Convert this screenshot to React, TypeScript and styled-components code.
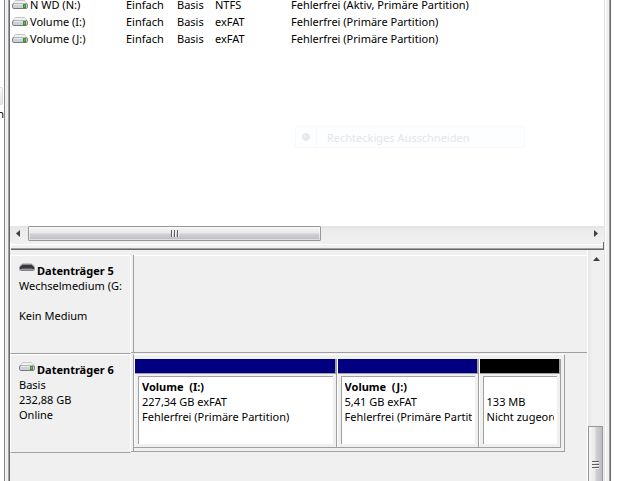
import React from "react";
import styled, { createGlobalStyle } from "styled-components";

const Global = createGlobalStyle`
  * { box-sizing: border-box; }
  body {
    margin: 0;
    background: #fff;
    color: #000;
    font: 11px/15px "Noto Sans", "Open Sans", sans-serif;
  }
`;

const Page = styled.div`
  display: flex;
  height: 100vh;
  overflow: hidden;
`;

const Tree = styled.aside`
  flex: none;
  width: 5px;
  padding-top: 87px;
  overflow: hidden;
  border-right: 1px solid #828790;
`;

const TreeButton = styled.button`
  display: block;
  width: 3px;
  height: 18px;
  padding: 0;
  border: 1px solid #dcdcdc;
  border-left: 0;
  border-radius: 0 2px 2px 0;
  background: linear-gradient(#fafafa, #e4e4e4);
`;

const TreeText = styled.span`
  display: flex;
  justify-content: flex-end;
  width: 4px;
  margin-top: 1px;
`;

const Frame = styled.main`
  flex: 1;
  min-width: 0;
  display: grid;
  grid-template-rows: minmax(0, 226fr) auto auto minmax(0, 231fr);
  border-left: 3px solid #f0f0f0;
  padding-left: 2px;
  box-shadow: inset 1px 0 #a0a0a0, inset 2px 0 #696969;
`;

const Edge = styled.div`
  flex: none;
  width: 7px;
  margin-right: 15px;
  border-left: 1px solid #e3e3e3;
  border-right: 1px solid #696969;
  background: #f0f0f0;
  box-shadow: inset 1px 0 #fff, inset -1px 0 #a0a0a0;
`;

const VolumePane = styled.section`
  position: relative;
  overflow: hidden;
`;

const Volumes = styled.table`
  width: 100%;
  margin-top: -4px;
  table-layout: fixed;
  border-collapse: collapse;
`;

const Cell = styled.td<{ $width?: number }>`
  width: ${(p) => (p.$width ? `${p.$width}px` : "auto")};
  height: 17px;
  padding: 0;
  white-space: nowrap;
  line-height: 17px;
`;

const NameLine = styled.div`
  display: flex;
  align-items: center;
  gap: 2px;
  padding-left: 2px;
`;

const GhostItem = styled.button`
  position: absolute;
  left: 285px;
  top: 126px;
  width: 230px;
  height: 22px;
  display: flex;
  align-items: center;
  padding: 0;
  border: 1px solid #f5f8fd;
  border-radius: 3px;
  background: #fdfeff;
  color: #e6e6e6;
  font-family: inherit;
  font-size: 11px;
`;

const GhostMark = styled.span`
  display: flex;
  align-items: center;
  justify-content: center;
  width: 21px;
  height: 20px;
  margin-right: 10px;
  border-right: 1px solid #f7fafd;
`;

const HBar = styled.div`
  display: flex;
  height: 16px;
  background: linear-gradient(#e3e3e3, #ebebeb 4px, #f0f0f0);
`;

const Arrow = styled.button<{ $vertical?: boolean }>`
  flex: none;
  display: flex;
  align-items: center;
  justify-content: center;
  width: ${(p) => (p.$vertical ? "auto" : "18px")};
  height: ${(p) => (p.$vertical ? "18px" : "15px")};
  padding: 0;
  border: 0;
  background: none;
`;

const HThumb = styled.div`
  flex: 11 1 0;
  display: flex;
  align-items: center;
  justify-content: center;
  height: 15px;
  border: 1px solid #979797;
  border-radius: 1px;
  background: linear-gradient(#f5f5f5, #e9e9eb 45%, #d0d1d3 55%, #bcbdc1);
  box-shadow: inset 0 0 0 1px rgba(255, 255, 255, 0.5);
`;

const HSpace = styled.div`
  flex: 10 1 0;
`;

const Splitter = styled.div`
  height: 8px;
  margin-left: 1px;
  border: solid #696969;
  border-width: 0 1px 1px 0;
  background: linear-gradient(#f0f0f0 2px, #fff 2px, #fff 3px, #f0f0f0 3px, #f0f0f0 6px, #a0a0a0 6px);
`;

const DiskPane = styled.section`
  display: flex;
  overflow: hidden;
  background: #f0f0f0;
`;

const Disks = styled.div`
  flex: 1;
  min-width: 0;
  padding-top: 5px;
`;

const Disk = styled.article`
  display: flex;
  align-items: flex-start;
  height: 99px;
`;

const DiskLabel = styled.div`
  flex: none;
  width: 121px;
  height: 99px;
  padding: 7px 0 0 8px;
  overflow: hidden;
  white-space: nowrap;
  border: 1px solid #fff;
  border-bottom-color: #a0a0a0;
`;

const DiskTitle = styled.h2`
  display: flex;
  align-items: flex-start;
  gap: 2px;
  margin: 0;
  font-size: 11px;
  font-weight: bold;
  line-height: 15px;
`;

const Line = styled.div`
  min-height: 15px;
  white-space: pre;
  overflow: hidden;
`;

const LabelLine = styled(Line)`
  width: 107px;
`;

const Joint = styled.div`
  flex: none;
  width: 3px;
  height: 98px;
  border-bottom: 1px solid #a0a0a0;
  border-right: 1px solid #a0a0a0;
`;

const Media = styled.div<{ $framed?: boolean }>`
  flex: 1;
  min-width: 0;
  display: flex;
  height: 98px;
  margin-right: ${(p) => (p.$framed ? "22px" : "0")};
  padding: ${(p) => (p.$framed ? "4px 3px 3px 0" : "0")};
  border-top: 1px solid #fff;
  border-bottom: 1px solid #a0a0a0;
  border-right: ${(p) => (p.$framed ? "1px solid #a0a0a0" : "0")};
`;

const Partition = styled.div<{ $share: number }>`
  flex: ${(p) => p.$share} 1 0;
  min-width: 0;
  display: flex;
  flex-direction: column;
  border: solid #a0a0a0;
  border-width: 0 1px 1px 0;
  box-shadow: inset 1px 0 #fff;
`;

const Stripe = styled.div<{ $color: string }>`
  height: 15px;
  margin-left: 1px;
  border: solid #a0a0a0;
  border-width: 0 1px 1px 0;
  background: ${(p) => p.$color};
`;

const PartitionBody = styled.div`
  flex: 1;
  min-height: 0;
  margin: 2px 3px 3px 4px;
  padding: 2px 3px 0 3px;
  border: solid #a0a0a0;
  border-width: 1px 0 0 1px;
  background: #fff;
`;

const PartitionName = styled(Line)`
  font-weight: bold;
`;

const VBar = styled.div`
  flex: none;
  width: 17px;
  display: flex;
  flex-direction: column;
  border-left: 1px solid #fff;
  background: linear-gradient(90deg, #e6e6e6, #efefef 4px, #f0f0f0);
`;

const VSpace = styled.div`
  flex: 1;
`;

const VThumb = styled.div`
  flex: none;
  display: flex;
  justify-content: center;
  width: 15px;
  height: 24%;
  padding-top: 33px;
  border: 1px solid #979797;
  border-bottom: 0;
  border-radius: 1px 1px 0 0;
  background: linear-gradient(90deg, #f5f5f5, #e9e9eb 45%, #d0d1d3 55%, #bcbdc1);
`;

const Svg = styled.svg`
  display: block;
  flex: none;
`;

function DriveIcon() {
  return (
    <Svg width="16" height="10" viewBox="0 0 16 10" aria-hidden="true">
      <path d="M3.5 0h9L15.5 4H.5z" fill="#f0f0f1" />
      <path d="M3 .5h10" stroke="#c6c7ca" />
      <path d="M3.5 .5L1 3.5M12.5 .5L15 3.5" stroke="#cfd0d3" />
      <rect x=".5" y="3.5" width="15" height="5" rx="1.5" fill="#cdcfd9" stroke="#85878d" />
      <path d="M2 3.5h12" stroke="#b4b6bd" />
      <path d="M2 4.5h9" stroke="#e6e7ee" />
      <path d="M2 8.5h12" stroke="#77797f" />
      <rect x="11" y="4" width="3" height="4" fill="#3c8f34" />
      <rect x="12" y="5" width="1" height="2" fill="#55d02c" />
    </Svg>
  );
}

function RemovableIcon() {
  return (
    <Svg width="16" height="10" viewBox="0 0 16 10" aria-hidden="true">
      <path d="M4 0h8l3 2 1 3H0l1-3z" fill="#c3c4c6" />
      <path d="M3 1.5h10" stroke="#8a8b8d" />
      <rect x="0" y="3" width="16" height="5" rx="2" fill="#9a9b9e" />
      <path d="M3 2h10l2 2v2h-2l-1-1H4L3 6H1V4z" fill="#38383a" />
      <path d="M4 5.5h8" stroke="#606164" />
      <path d="M2 7.5h12" stroke="#85868a" />
    </Svg>
  );
}

function Triangle({ dir }: { dir: "left" | "right" | "up" }) {
  const d = { left: "M4 0v7L0 3.5z", right: "M2 0v7l4-3.5z", up: "M0 5h7L3.5 1z" }[dir];
  return (
    <Svg width="7" height="7" viewBox="0 0 7 7" aria-hidden="true">
      <path d={d} fill="#404040" />
    </Svg>
  );
}

function Grip({ vertical }: { vertical?: boolean }) {
  return (
    <Svg width="9" height="9" viewBox="0 0 9 9" aria-hidden="true">
      <g transform={vertical ? "matrix(0 1 1 0 0 0)" : undefined}>
        <path d="M1.5 1v7M4.5 1v7M7.5 1v7" stroke="#5c5c5c" />
        <path d="M2.5 1v7M5.5 1v7M8.5 1v7" stroke="#f4f4f4" />
      </g>
    </Svg>
  );
}

const volumes = [
  ["N WD (N:)", "Einfach", "Basis", "NTFS", "Fehlerfrei (Aktiv, Primäre Partition)"],
  ["Volume (I:)", "Einfach", "Basis", "exFAT", "Fehlerfrei (Primäre Partition)"],
  ["Volume (J:)", "Einfach", "Basis", "exFAT", "Fehlerfrei (Primäre Partition)"],
];

const partitions = [
  { name: "Volume  (I:)", size: "227,34 GB exFAT", state: "Fehlerfrei (Primäre Partition)", color: "#000080", share: 203 },
  { name: "Volume  (J:)", size: "5,41 GB exFAT", state: "Fehlerfrei (Primäre Partition)", color: "#000080", share: 142 },
  { name: "", size: "133 MB", state: "Nicht zugeordnet", color: "#000", share: 82 },
];

export default function App() {
  return (
    <Page>
      <Global />
      <Tree>
        <TreeButton aria-label="Bildlauf" />
        <TreeText>n</TreeText>
      </Tree>
      <Frame>
        <VolumePane>
          <Volumes>
            <tbody>
              {volumes.map(([name, layout, type, fs, state]) => (
                <tr key={name}>
                  <Cell $width={116}>
                    <NameLine>
                      <DriveIcon />
                      {name}
                    </NameLine>
                  </Cell>
                  <Cell $width={51}>{layout}</Cell>
                  <Cell $width={38}>{type}</Cell>
                  <Cell $width={76}>{fs}</Cell>
                  <Cell>{state}</Cell>
                </tr>
              ))}
            </tbody>
          </Volumes>
          <GhostItem>
            <GhostMark>
              <Svg width="8" height="8" viewBox="0 0 8 8" aria-hidden="true">
                <circle cx="4" cy="4" r="3.5" fill="#e6e6f1" stroke="#e9e9ee" />
                <circle cx="3" cy="3" r="1" fill="#f5f5fb" />
              </Svg>
            </GhostMark>
            Rechteckiges Ausschneiden
          </GhostItem>
        </VolumePane>
        <HBar>
          <Arrow aria-label="Nach links">
            <Triangle dir="left" />
          </Arrow>
          <HThumb>
            <Grip />
          </HThumb>
          <HSpace />
          <Arrow aria-label="Nach rechts">
            <Triangle dir="right" />
          </Arrow>
        </HBar>
        <Splitter />
        <DiskPane>
          <Disks>
            <Disk>
              <DiskLabel>
                <DiskTitle>
                  <RemovableIcon />
                  Datenträger 5
                </DiskTitle>
                <LabelLine>Wechselmedium (G:</LabelLine>
                <LabelLine />
                <LabelLine>Kein Medium</LabelLine>
              </DiskLabel>
              <Joint />
              <Media />
            </Disk>
            <Disk>
              <DiskLabel>
                <DiskTitle>
                  <DriveIcon />
                  Datenträger 6
                </DiskTitle>
                <LabelLine>Basis</LabelLine>
                <LabelLine>232,88 GB</LabelLine>
                <LabelLine>Online</LabelLine>
              </DiskLabel>
              <Joint />
              <Media $framed>
                {partitions.map((p) => (
                  <Partition key={p.size} $share={p.share}>
                    <Stripe $color={p.color} />
                    <PartitionBody>
                      <PartitionName>{p.name}</PartitionName>
                      <Line>{p.size}</Line>
                      <Line>{p.state}</Line>
                    </PartitionBody>
                  </Partition>
                ))}
              </Media>
            </Disk>
          </Disks>
          <VBar>
            <Arrow $vertical aria-label="Nach oben">
              <Triangle dir="up" />
            </Arrow>
            <VSpace />
            <VThumb>
              <Grip vertical />
            </VThumb>
          </VBar>
        </DiskPane>
      </Frame>
      <Edge />
    </Page>
  );
}
